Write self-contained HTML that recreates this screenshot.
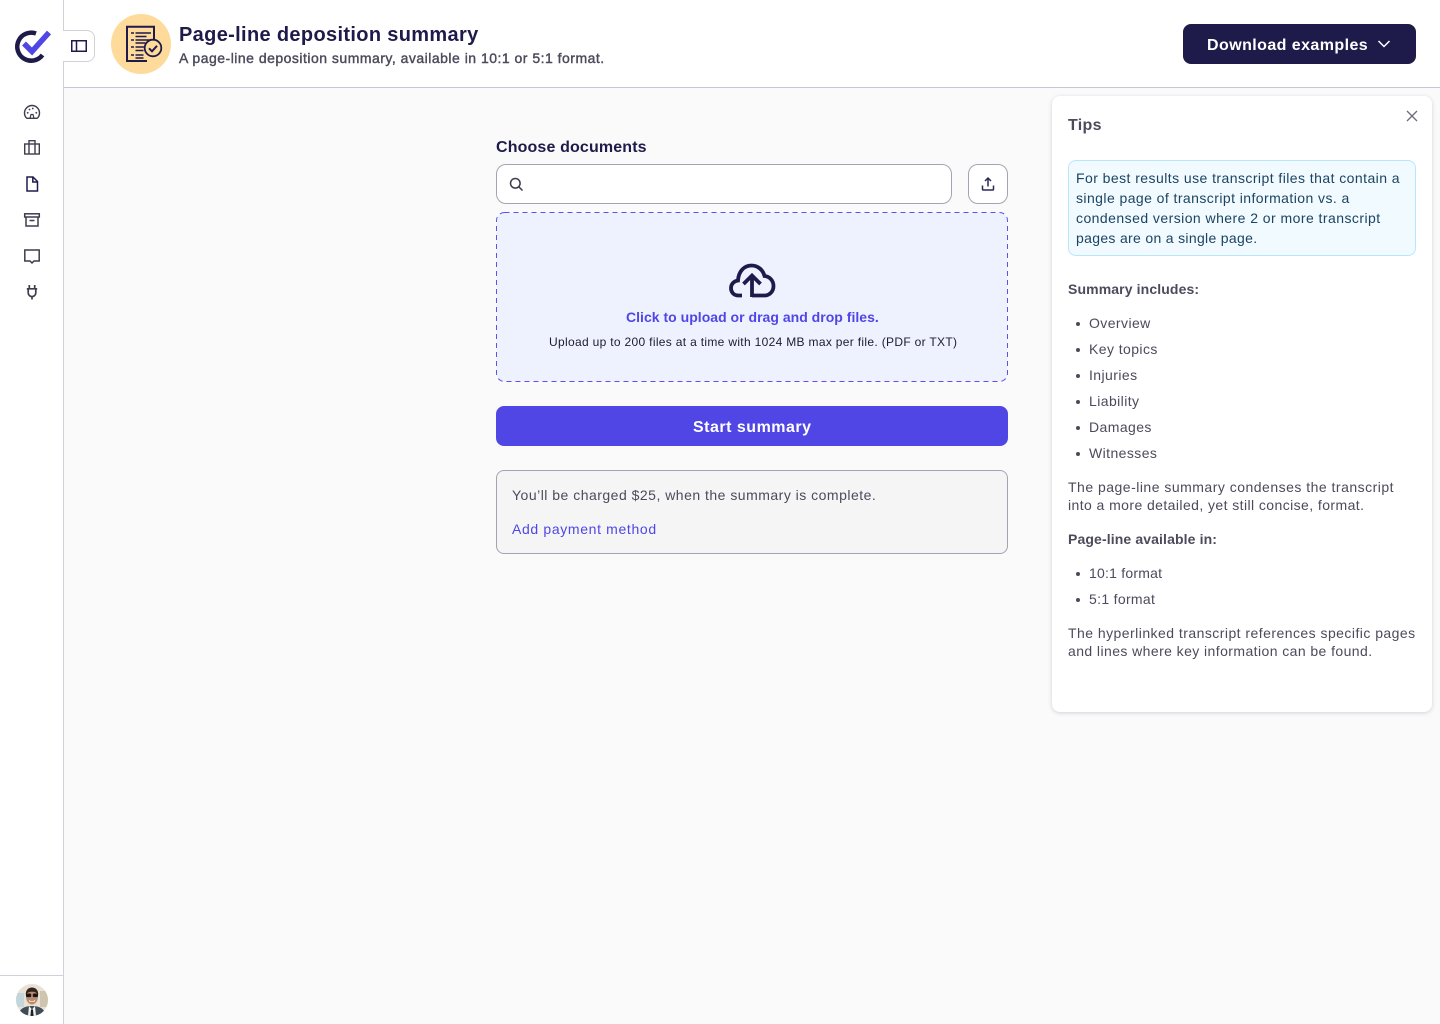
<!DOCTYPE html>
<html lang="en"><head><meta charset="utf-8"><title>Page-line deposition summary</title>
<style>
*{box-sizing:border-box}
html,body{margin:0;padding:0}
body{width:1440px;height:1024px;overflow:hidden;position:relative;background:#fafafa;font-family:"Liberation Sans",sans-serif;color:#4b4b5c}
.a{position:absolute}
.t{position:absolute;white-space:nowrap;font-size:14px;line-height:18px;letter-spacing:.42px}
.li:before{content:"";position:absolute;left:-13px;top:8px;width:4px;height:4px;border-radius:50%;background:#4b4b5c}
svg{position:absolute;display:block;overflow:visible}
.b{font-weight:700;letter-spacing:.24px}
</style></head><body>

<div class="a" style="left:0;top:0;width:64px;height:1024px;background:#fff;border-right:1px solid #d2d0d9"></div>
<div class="a" style="left:64px;top:0;width:1376px;height:88px;background:#fff;border-bottom:1px solid #c6c6d2"></div>
<div class="a" style="left:0;top:975px;width:64px;height:1px;background:#d2d0d9"></div>

<svg style="left:15px;top:29px" width="36" height="34" viewBox="0 0 36 34"><path d="M21 4.500A14 14 0 1 0 27.500 26" fill="none" stroke="#1e1b4b" stroke-width="4.500"/><path d="M9 14.500l8 8L34 3.500" fill="none" stroke="#4f46e5" stroke-width="5.500"/></svg>

<div class="a" style="left:63px;top:30px;width:32px;height:32px;background:#fff;border:1px solid #d2d0d9;border-left:0;border-radius:0 8px 8px 0"></div>
<svg style="left:71px;top:40px" width="16" height="12" viewBox="0 0 16 12" fill="none" stroke="#1e1b4b" stroke-width="1.500"><rect x=".75" y=".75" width="14.500" height="10.500"/><path d="M5.500 1v10"/></svg>

<svg style="left:23px;top:103px" width="18" height="18" viewBox="0 0 18 18" fill="none" stroke="#3d3d4e" stroke-width="1.400"><path d="M4 15.300C2.500 14.300 1.500 12.200 1.500 10a7.500 7.500 0 0 1 15 0c0 2.200-1 4.300-2.500 5.300z"/><path d="M7 15.300l1-3.800h2l1 3.800" stroke-width="1.200"/><circle cx="4.700" cy="9.800" r=".9" fill="#3d3d4e" stroke="none"/><circle cx="6.500" cy="6.500" r=".9" fill="#3d3d4e" stroke="none"/><circle cx="9.800" cy="5.500" r=".9" fill="#3d3d4e" stroke="none"/><circle cx="13.300" cy="9.800" r=".9" fill="#3d3d4e" stroke="none"/></svg>
<svg style="left:23px;top:139px" width="18" height="18" viewBox="0 0 18 18" fill="none" stroke="#3d3d4e" stroke-width="1.400"><rect x="1.700" y="5" width="14.600" height="10"/><path d="M6 15V1.700h6V15"/></svg>
<svg style="left:23px;top:175px" width="18" height="18" viewBox="0 0 18 18" fill="none" stroke="#1e1b4b" stroke-width="1.500"><path d="M4 2h6l4.500 4.500V16H4z"/><path d="M9.800 2v5h4.700"/></svg>
<svg style="left:23px;top:211px" width="18" height="18" viewBox="0 0 18 18" fill="none" stroke="#3d3d4e" stroke-width="1.500"><rect x="1.700" y="2.800" width="14.600" height="3.200"/><path d="M3 6v9h12V6M6.500 9.500h5"/></svg>
<svg style="left:23px;top:247px" width="18" height="18" viewBox="0 0 18 18" fill="none" stroke="#3d3d4e" stroke-width="1.500"><path d="M1.800 3h14.400v11h-5.200L9 16l-2-2H1.800z"/></svg>
<svg style="left:23px;top:283px" width="18" height="18" viewBox="0 0 18 18" fill="none" stroke="#3d3d4e" stroke-width="1.700"><path d="M6.300 2v3.500M11.700 2v3.500M3.800 5.800h10.400M5.200 5.800v4a3.800 3.800 0 0 0 7.600 0v-4M9 13.500V16.500"/></svg>

<svg style="left:16px;top:984px" width="32" height="32" viewBox="0 0 32 32"><defs><clipPath id="av"><circle cx="16" cy="16" r="16"/></clipPath></defs><g clip-path="url(#av)"><rect width="32" height="32" fill="#e9e2d4"/><rect x="0" y="9" width="8" height="14" fill="#c3d6dc"/><rect x="24" y="7" width="8" height="16" fill="#cfc5af"/><path d="M2 32c1-7 6-10 14-10s13 3 14 10z" fill="#414b55"/><path d="M13 22l3 3.500 3-3.500 1 10h-8z" fill="#f4f4f1"/><path d="M15 25.500h2l.6 6.500h-3.200z" fill="#1d2027"/><ellipse cx="16" cy="12.500" rx="6" ry="8" fill="#bd8a6c"/><path d="M9.800 11c-.4-5 2.800-7.500 6.200-7.500s6.600 2.500 6.200 7.500c-1.300-2.500-3-3.300-6.200-3.300s-4.900.8-6.200 3.300z" fill="#33241b"/><rect x="10" y="9.500" width="5.200" height="3.600" rx="1.400" fill="#15171c"/><rect x="16.800" y="9.500" width="5.200" height="3.600" rx="1.400" fill="#15171c"/><path d="M12.700 15.500c2 2.200 4.600 2.200 6.600 0l-.7 2.300h-5.200z" fill="#f6efe9"/></g></svg>

<div class="a" style="left:111px;top:14px;width:60px;height:60px;border-radius:50%;background:#fedb9b"></div>
<svg style="left:111px;top:14px" width="60" height="60" viewBox="0 0 60 60" fill="none" stroke="#1e1b4b"><path d="M36 47H16V12.800H43V30" stroke-width="2"/><path d="M20 19h3M20 26h3M20 33h3M20 41h3" stroke-width="1.500"/><path d="M24.500 19H40M24.500 22.500h11M24.500 26H40M24.500 29h10M24.500 33h9M24.500 36.500h8M24.500 41h8M24.500 44h8" stroke-width="1.400"/><circle cx="42" cy="34" r="8.300" fill="#fedb9b" stroke-width="1.800"/><path d="M38 34.300l3 3 5-5.500" stroke-width="2"/></svg>

<div class="t" style="left:179px;top:22px;font-size:20px;line-height:26px;font-weight:700;color:#1e1b4b;letter-spacing:.34px">Page-line deposition summary</div>
<div class="t" style="left:179px;top:49px;color:#4b4b5c;letter-spacing:.49px;-webkit-text-stroke:.4px #4b4b5c">A page-line deposition summary, available in 10:1 or 5:1 format.</div>

<div class="a" style="left:1183px;top:24px;width:233px;height:40px;background:#1e1b4b;border-radius:8px"></div>
<div class="t b" style="left:1207px;top:36px;font-size:16px;line-height:20px;color:#fff;letter-spacing:.43px">Download examples</div>
<svg style="left:1376px;top:37px" width="16" height="14" viewBox="0 0 16 14" fill="none" stroke="#fff" stroke-width="1.500"><path d="M2.500 4l5.500 5.500L13.500 4"/></svg>

<div class="t b" style="left:496px;top:138px;font-size:16px;line-height:20px;color:#1e1b4b;letter-spacing:.14px">Choose documents</div>
<div class="a" style="left:496px;top:164px;width:456px;height:40px;background:#fff;border:1px solid #a5a3b3;border-radius:10px"></div>
<svg style="left:508px;top:176px" width="16" height="16" viewBox="0 0 16 16" fill="none" stroke="#3d3d4e" stroke-width="1.500"><circle cx="7.300" cy="7.300" r="4.800"/><path d="M10.800 10.800l3.700 3.700"/></svg>
<div class="a" style="left:968px;top:164px;width:40px;height:40px;background:#fff;border:1px solid #a5a3b3;border-radius:10px"></div>
<svg style="left:980px;top:176px" width="16" height="16" viewBox="0 0 16 16" fill="none" stroke="#2d2a55" stroke-width="1.500"><path d="M8 10.500V2.500M5 5l3-3 3 3M2.500 9.500v3.800c0 .5.300.7.700.7h9.600c.4 0 .7-.2.700-.7V9.500"/></svg>

<svg style="left:496px;top:212px" width="512" height="170" viewBox="0 0 512 170"><rect x=".5" y=".5" width="511" height="169" rx="8" fill="#eef2ff" stroke="#5a52ea" stroke-width="1" stroke-dasharray="5 4"/></svg>
<svg style="left:728px;top:260px" width="48" height="40" viewBox="0 0 48 40" fill="none" stroke="#1e1b4b" stroke-width="3.800"><path d="M14 35.500H10.500C5.500 35.500 3 32 3 28c0-4 3-7 7-7.500C10.500 11 16.500 5.500 23.500 5.500c6.500 0 11.500 4.500 13 10.500 5 .5 9 4.500 9 10 0 5.500-4 9.500-9 9.500H24"/><path d="M24 37V15.500M15.500 24L24 15.500 32.500 24"/></svg>

<div class="t b" style="left:626px;top:308px;color:#4f46e5;letter-spacing:.02px">Click to upload or drag and drop files.</div>
<div class="t" style="left:549px;top:333px;font-size:12px;color:#1e1b2e;letter-spacing:.32px">Upload up to 200 files at a time with 1024 MB max per file. (PDF or TXT)</div>

<div class="a" style="left:496px;top:406px;width:512px;height:40px;background:#4f46e5;border-radius:8px"></div>
<div class="t b" style="left:693px;top:418px;font-size:16px;line-height:20px;color:#fff;letter-spacing:.5px">Start summary</div>

<div class="a" style="left:496px;top:470px;width:512px;height:84px;background:#f5f5f5;border:1px solid #a5a3b3;border-radius:8px"></div>
<div class="t" style="left:512px;top:486px;letter-spacing:.49px">You’ll be charged $25, when the summary is complete.</div>
<div class="t" style="left:512px;top:520px;color:#4f46e5;letter-spacing:.65px">Add payment method</div>

<div class="a" style="left:1052px;top:96px;width:380px;height:616px;background:#fff;border-radius:8px;box-shadow:0 1px 4px rgba(30,27,75,.18)"></div>
<div class="t b" style="left:1068px;top:116px;font-size:16px;line-height:20px;color:#4b4b5c;letter-spacing:.3px">Tips</div>
<svg style="left:1404px;top:108px" width="16" height="16" viewBox="0 0 16 16" fill="none" stroke="#6d6b80" stroke-width="1.300"><path d="M3 3l10 10M13 3L3 13"/></svg>

<div class="a" style="left:1068px;top:160px;width:348px;height:96px;background:#f0faff;border:1px solid #bae6fd;border-radius:8px"></div>
<div class="t" style="left:1076px;top:169px;color:#1c4460;letter-spacing:.44px">For best results use transcript files that contain a</div>
<div class="t" style="left:1076px;top:189px;color:#1c4460;letter-spacing:.43px">single page of transcript information vs. a</div>
<div class="t" style="left:1076px;top:209px;color:#1c4460;letter-spacing:.45px">condensed version where 2 or more transcript</div>
<div class="t" style="left:1076px;top:229px;color:#1c4460;letter-spacing:.32px">pages are on a single page.</div>

<div class="t b" style="left:1068px;top:280px;letter-spacing:.12px">Summary includes:</div>
<div class="t li" style="left:1089px;top:314px">Overview</div>
<div class="t li" style="left:1089px;top:340px">Key topics</div>
<div class="t li" style="left:1089px;top:366px">Injuries</div>
<div class="t li" style="left:1089px;top:392px">Liability</div>
<div class="t li" style="left:1089px;top:418px">Damages</div>
<div class="t li" style="left:1089px;top:444px">Witnesses</div>
<div class="t" style="left:1068px;top:478px;letter-spacing:.49px">The page-line summary condenses the transcript</div>
<div class="t" style="left:1068px;top:496px">into a more detailed, yet still concise, format.</div>
<div class="t b" style="left:1068px;top:530px;letter-spacing:.12px">Page-line available in:</div>
<div class="t li" style="left:1089px;top:564px;letter-spacing:.22px">10:1 format</div>
<div class="t li" style="left:1089px;top:590px;letter-spacing:.32px">5:1 format</div>
<div class="t" style="left:1068px;top:624px;letter-spacing:.46px">The hyperlinked transcript references specific pages</div>
<div class="t" style="left:1068px;top:642px">and lines where key information can be found.</div>

</body></html>
